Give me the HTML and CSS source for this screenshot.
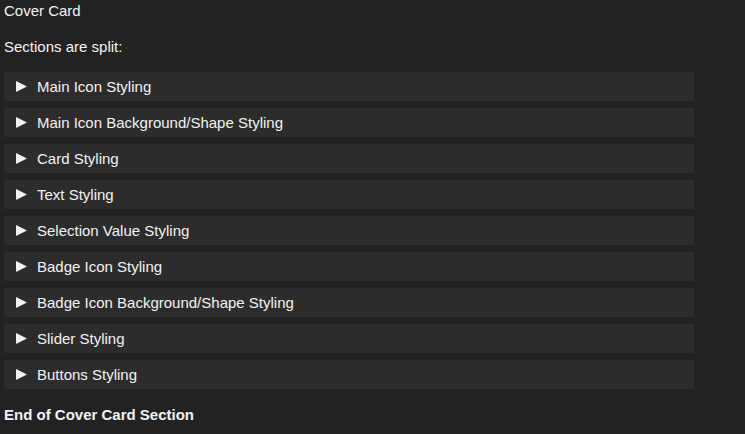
FILE: index.html
```html
<!DOCTYPE html>
<html>
<head>
<meta charset="utf-8">
<link rel="stylesheet" href="styles.css">
</head>
<body>
<div class="page">
  <div class="title">Cover Card</div>
  <div class="intro">Sections are split:</div>
  <div class="sections">
    <div class="section"><svg class="tri" viewBox="0 0 11 11"><polygon points="0,0 11,5.5 0,11"/></svg><span>Main Icon Styling</span></div>
    <div class="section"><svg class="tri" viewBox="0 0 11 11"><polygon points="0,0 11,5.5 0,11"/></svg><span>Main Icon Background/Shape Styling</span></div>
    <div class="section"><svg class="tri" viewBox="0 0 11 11"><polygon points="0,0 11,5.5 0,11"/></svg><span>Card Styling</span></div>
    <div class="section"><svg class="tri" viewBox="0 0 11 11"><polygon points="0,0 11,5.5 0,11"/></svg><span>Text Styling</span></div>
    <div class="section"><svg class="tri" viewBox="0 0 11 11"><polygon points="0,0 11,5.5 0,11"/></svg><span>Selection Value Styling</span></div>
    <div class="section"><svg class="tri" viewBox="0 0 11 11"><polygon points="0,0 11,5.5 0,11"/></svg><span>Badge Icon Styling</span></div>
    <div class="section"><svg class="tri" viewBox="0 0 11 11"><polygon points="0,0 11,5.5 0,11"/></svg><span>Badge Icon Background/Shape Styling</span></div>
    <div class="section"><svg class="tri" viewBox="0 0 11 11"><polygon points="0,0 11,5.5 0,11"/></svg><span>Slider Styling</span></div>
    <div class="section"><svg class="tri" viewBox="0 0 11 11"><polygon points="0,0 11,5.5 0,11"/></svg><span>Buttons Styling</span></div>
  </div>
  <div class="end">End of Cover Card Section</div>
</div>
</body>
</html>
```
FILE: styles.css
```css
html, body {
  margin: 0;
  padding: 0;
  background: #222222;
}
body {
  font-family: "Liberation Sans", Arial, sans-serif;
  font-size: 15px;
  color: #f2f2f2;
}
.page {
  padding: 2px 51px 0 4px;
}
.title {
  line-height: 17px;
}
.intro {
  line-height: 17px;
  margin-top: 19px;
}
.sections {
  margin-top: 17px;
  display: flex;
  flex-direction: column;
  gap: 7px;
}
.section {
  background: #2c2c2c;
  height: 29px;
  display: flex;
  align-items: center;
  padding-left: 12px;
}
.tri {
  width: 11px;
  height: 11px;
  fill: #f2f2f2;
  margin-right: 10px;
  flex: none;
}
.end {
  margin-top: 17px;
  line-height: 17px;
  font-weight: bold;
}
```
